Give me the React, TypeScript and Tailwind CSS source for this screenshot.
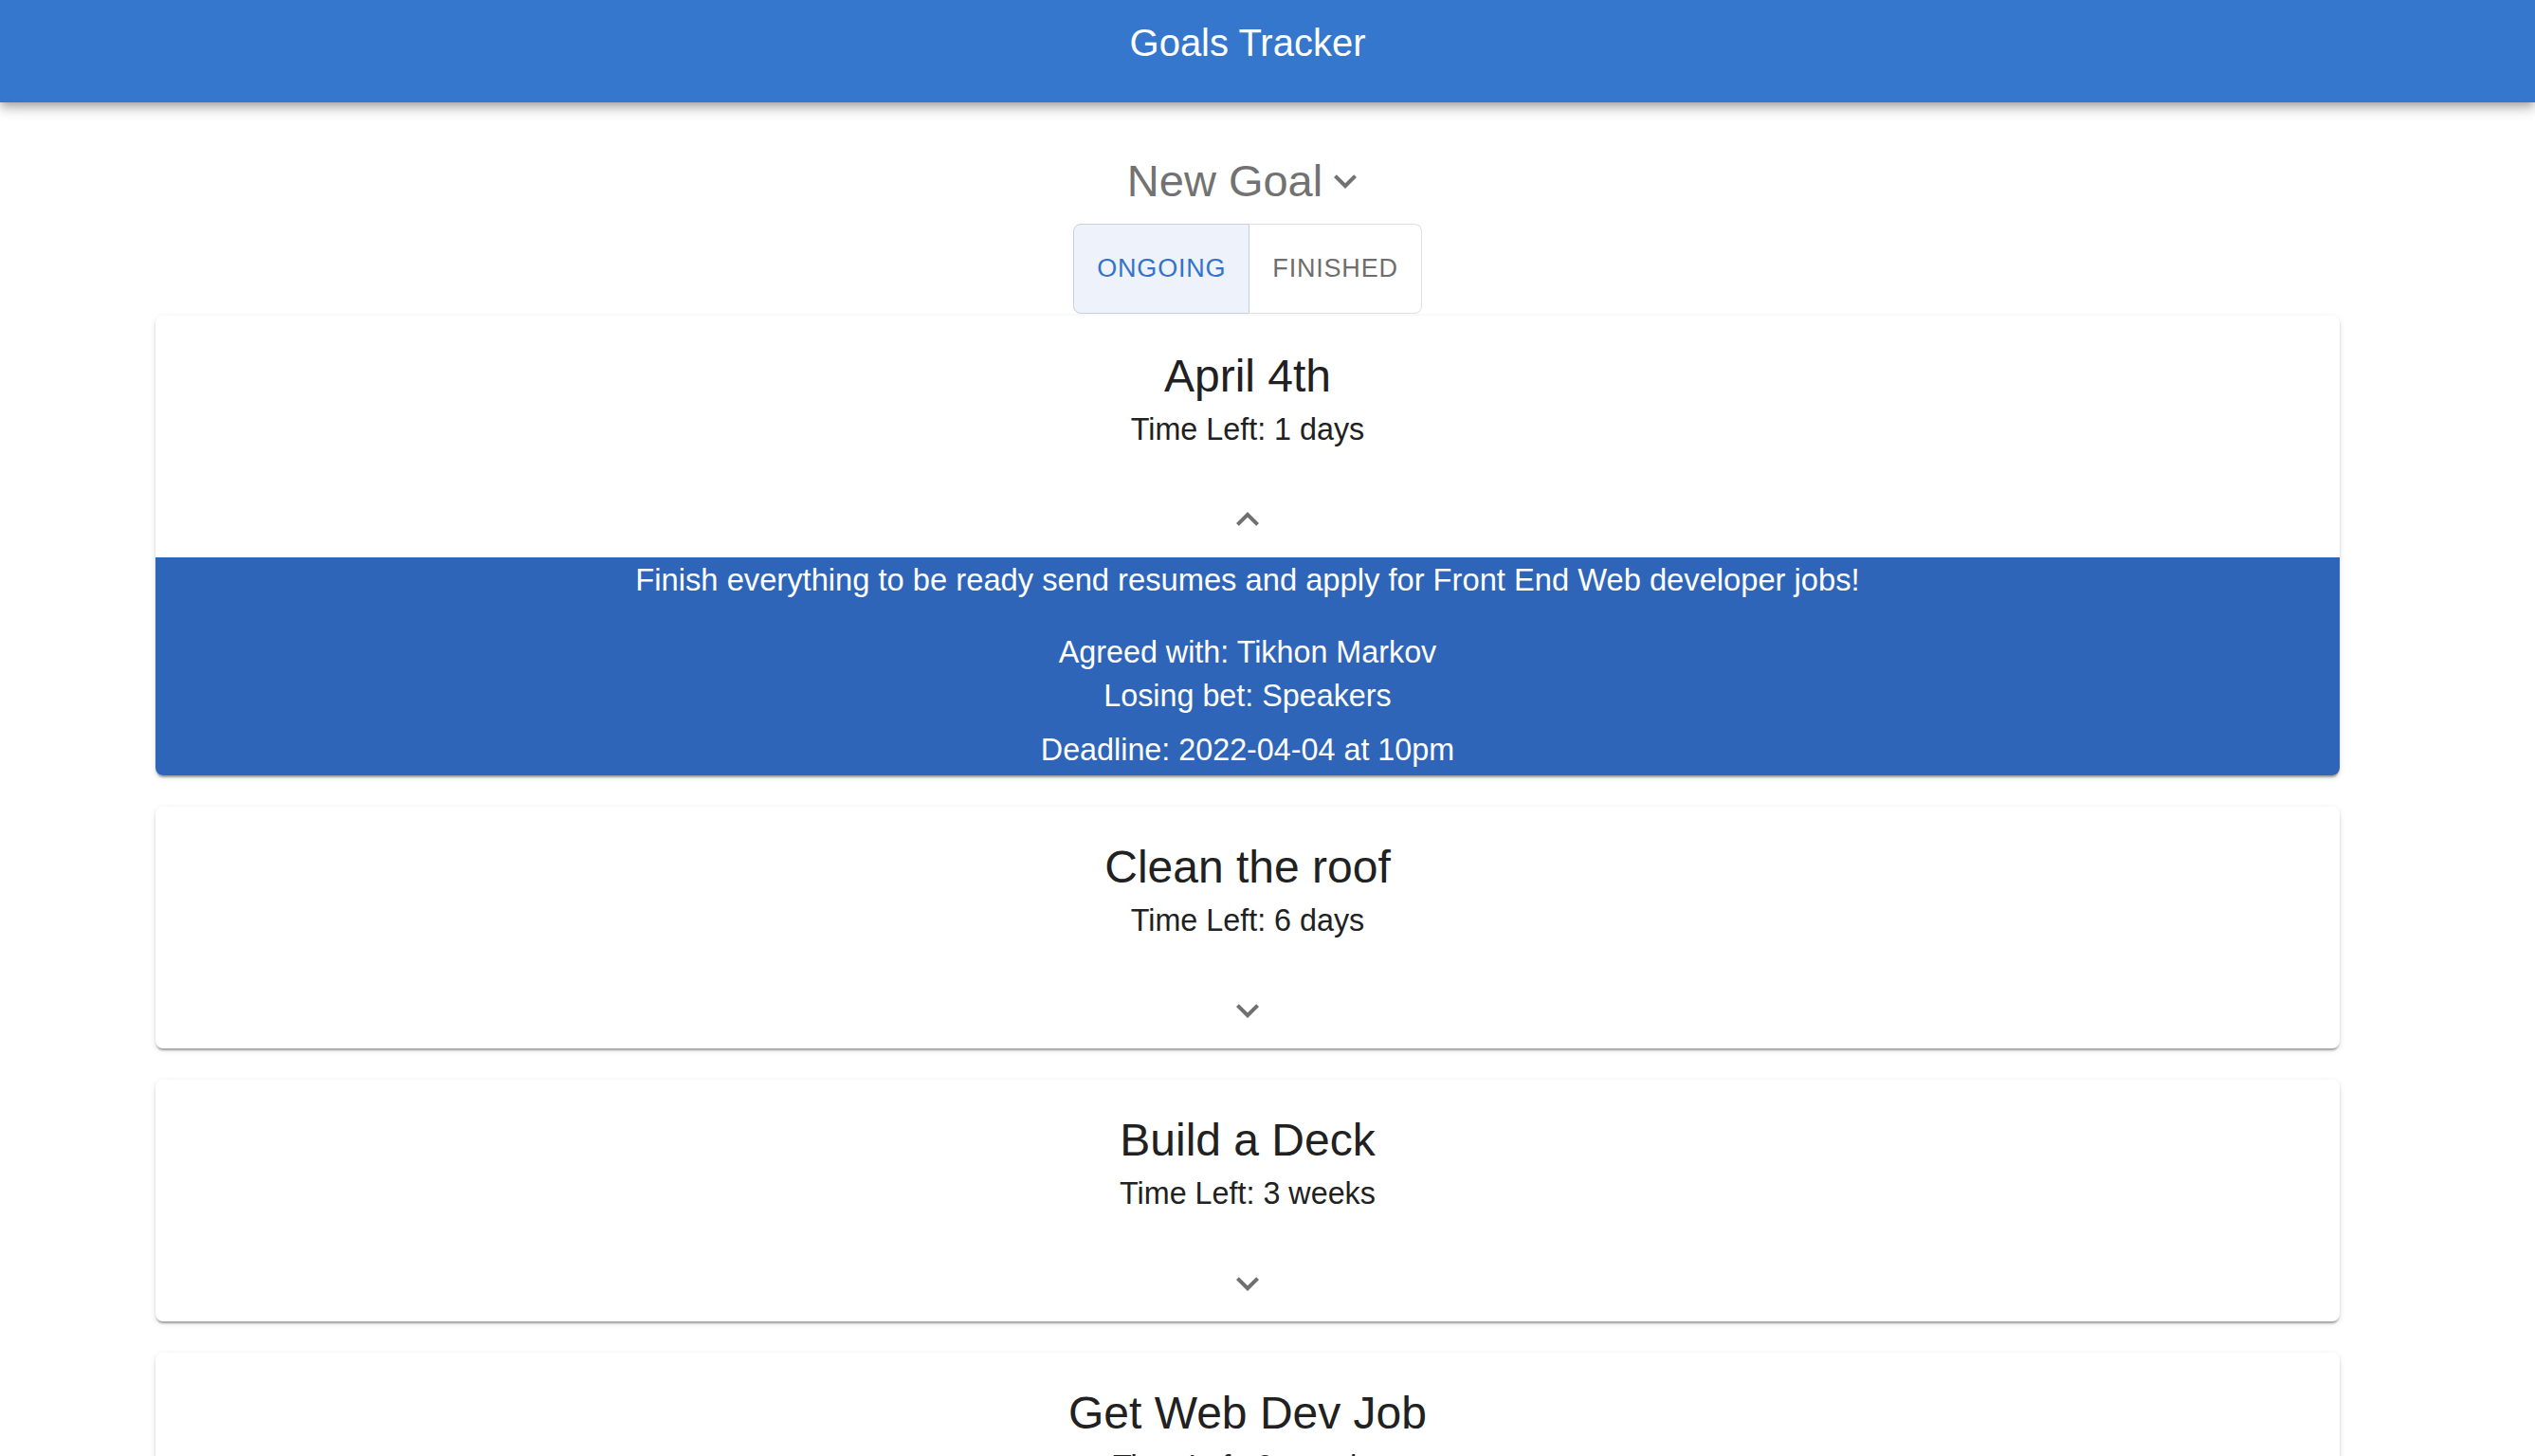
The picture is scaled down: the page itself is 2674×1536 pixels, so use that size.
import React from 'react';

interface Goal {
  title: string;
  timeLeft: string;
  open?: boolean;
  description?: string;
  agreedWith?: string;
  losingBet?: string;
  deadline?: string;
}

const goals: Goal[] = [
  {
    title: 'April 4th',
    timeLeft: '1 days',
    open: true,
    description: 'Finish everything to be ready send resumes and apply for Front End Web developer jobs!',
    agreedWith: 'Tikhon Markov',
    losingBet: 'Speakers',
    deadline: '2022-04-04 at 10pm',
  },
  { title: 'Clean the roof', timeLeft: '6 days' },
  { title: 'Build a Deck', timeLeft: '3 weeks' },
  { title: 'Get Web Dev Job', timeLeft: '2 months' },
];

const ExpandMore = ({ className = '' }: { className?: string }) => (
  <svg viewBox="0 0 24 24" className={className} fill="currentColor">
    <path d="M16.59 8.59 12 13.17 7.41 8.59 6 10l6 6 6-6z" />
  </svg>
);

const ExpandLess = ({ className = '' }: { className?: string }) => (
  <svg viewBox="0 0 24 24" className={className} fill="currentColor">
    <path d="m12 8-6 6 1.41 1.41L12 10.83l4.59 4.58L18 14z" />
  </svg>
);

const GoalCard = ({ goal, first }: { goal: Goal; first?: boolean }) => {
  return (
    <div
      className={`${first ? 'mt-[2px]' : 'mt-[33px]'} bg-white rounded-[8px] overflow-hidden shadow-[0_4px_2px_-2px_rgba(0,0,0,0.2),0_2px_2px_0_rgba(0,0,0,0.14),0_2px_6px_0_rgba(0,0,0,0.12)]`}
    >
      <div className="flex flex-col items-center pt-[32px] text-[#212121]">
        <h2 className="text-[48px] leading-[64px]">{goal.title}</h2>
        <p className="text-[32.3px] leading-[48px]">Time Left: {goal.timeLeft}</p>
        <button className="mt-[31px] p-[16px] text-[#707070]">
          {goal.open ? <ExpandLess className="w-[48px] h-[48px]" /> : <ExpandMore className="w-[48px] h-[48px]" />}
        </button>
      </div>
      {goal.open && (
        <div className="bg-[#2e65b9] text-white text-[32.3px] text-center pb-[3px]">
          <p className="text-[32.7px] leading-[48px]">{goal.description}</p>
          <p className="mt-[29px] leading-[46px]">Agreed with: {goal.agreedWith}</p>
          <p className="leading-[46px]">Losing bet: {goal.losingBet}</p>
          <p className="mt-[10px] leading-[48px]">Deadline: {goal.deadline}</p>
        </div>
      )}
    </div>
  );
};

export default function App() {
  return (
    <div className="min-h-screen bg-white font-['Liberation_Sans',Arial,sans-serif]">
      <header className="h-[108px] bg-[#3477cd] shadow-[0_4px_8px_-2px_rgba(0,0,0,0.2),0_8px_10px_0_rgba(0,0,0,0.14),0_2px_20px_0_rgba(0,0,0,0.12)] relative">
        <div className="w-[2632px] pt-[13px] text-center">
          <h1 className="text-white text-[40px] leading-[64px]">Goals Tracker</h1>
        </div>
      </header>

      <main className="w-[2632px] pl-[164px] pr-[164px] pb-[40px]">
        <div className="w-[2304px]">
          <div className="mt-[51px] flex justify-center items-center h-[64px] text-[#727272]">
            <span className="text-[47px] leading-[64px]">New Goal</span>
            <ExpandMore className="w-[48px] h-[48px]" />
          </div>

          <div className="mt-[13px] flex justify-center">
            <div className="flex h-[95px]">
              <button className="h-full px-[24px] bg-[#eef2fa] border border-[#c9ced8] rounded-l-[8px] text-[27px] tracking-[0.8px] text-[#3473cc]">
                ONGOING
              </button>
              <button className="h-full px-[24px] bg-white border border-l-0 border-[#dfe1e5] rounded-r-[8px] text-[27px] tracking-[0.8px] text-[#6e6e6e]">
                FINISHED
              </button>
            </div>
          </div>

          {goals.map((goal, index) => (
            <GoalCard key={index} goal={goal} first={index === 0} />
          ))}
        </div>
      </main>
    </div>
  );
}
